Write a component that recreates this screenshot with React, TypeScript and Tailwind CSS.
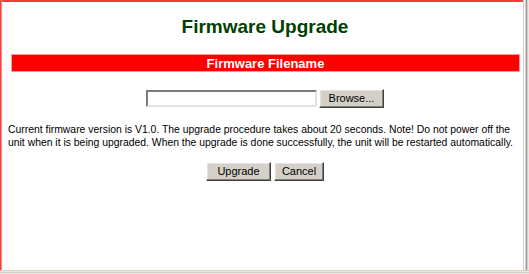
import React from "react";

const btn =
  "h-[19px] bg-[#d4d0c8] border border-t-[#ffffff] border-l-[#ffffff] border-r-[#404040] border-b-[#404040] shadow-[inset_-1px_-1px_0_#808080,inset_1px_1px_0_#e4e2dc] text-[11px] text-black leading-none flex items-center justify-center";

export default function App() {
  return (
    <div
      className="w-[529px] h-[274px] bg-white flex flex-col overflow-hidden"
      style={{ fontFamily: '"Liberation Sans", Arial, sans-serif' }}
    >
      <div className="flex flex-1 min-h-0">
        <div className="w-[2px] bg-[#ff3a3a] border-r border-[#ff8a8a]" />
        <div className="w-[521px] flex flex-col">
          <div className="h-[2px] bg-[#ff3a3a]" />
          <div className="flex-1 flex flex-col pl-[5px]">
            <h1 className="mt-[13px] text-center text-[19px] leading-[23px] font-bold text-[#004000]">
              Firmware Upgrade
            </h1>
            <div className="mt-[16px] ml-[4px] mr-[3px] h-[18px] bg-[#ff0000] border border-[#ff9a9a] flex items-center justify-center text-white font-bold text-[13px] leading-none">
              Firmware Filename
            </div>
            <div className="mt-[17px] flex justify-center items-center gap-[2px]">
              <div className="w-[171px] h-[17px] bg-white border-2 border-t-[#7a7a7a] border-l-[#7a7a7a] border-r-[#e4e2dc] border-b-[#e4e2dc]" />
              <button className={btn + " w-[65px]"}>Browse...</button>
            </div>
            <p className="mt-[15px] pl-[1px] text-[10.4px] leading-[13px] text-black whitespace-nowrap">
              Current firmware version is V1.0. The upgrade procedure takes about 20 seconds. Note! Do not power off the
              <br />
              unit when it is being upgraded. When the upgrade is done successfully, the unit will be restarted automatically.
            </p>
            <div className="mt-[13px] flex justify-center gap-[3px]">
              <button className={btn + " w-[65px]"}>Upgrade</button>
              <button className={btn + " w-[50px]"}>Cancel</button>
            </div>
          </div>
        </div>
        <div className="w-[6px] flex">
          <div className="w-[1px] bg-[#d4d0c8]" />
          <div className="w-[1px] bg-white" />
          <div className="w-[1px] bg-[#d4d0c8]" />
          <div className="w-[1px] bg-[#9a9a9a]" />
          <div className="w-[1px] bg-[#d4d0c8]" />
          <div className="w-[1px] bg-[#ece9e2]" />
        </div>
      </div>
      <div className="h-[4px] flex flex-col">
        <div className="h-[1px] bg-[#d4d0c8]" />
        <div className="h-[1px] bg-[#ece9e2]" />
        <div className="h-[1px] bg-[#d4d0c8]" />
        <div className="h-[1px] bg-[#ece9e2]" />
      </div>
    </div>
  );
}
